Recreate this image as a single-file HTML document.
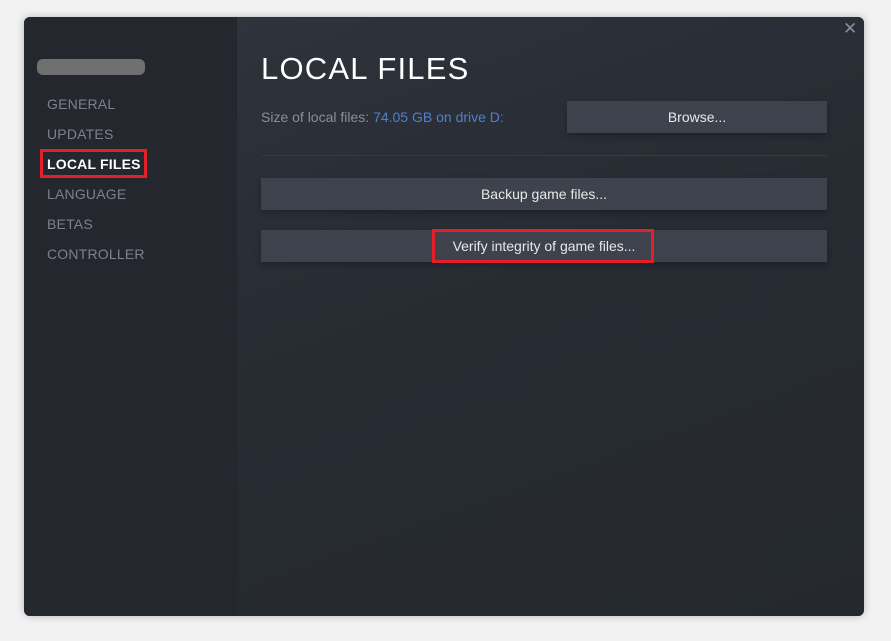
<!DOCTYPE html>
<html><head><meta charset="utf-8"><style>
html,body{margin:0;padding:0;width:891px;height:641px;background:#f2f2f2;overflow:hidden;font-family:"Liberation Sans",sans-serif;}
.win{position:absolute;left:24px;top:17px;width:840px;height:599px;border-radius:6px;overflow:hidden;background:#24272e;box-shadow:0 0 8px rgba(0,0,0,.25);}
.side{position:absolute;left:0;top:0;width:213px;height:599px;background:#24272e;}
.main{position:absolute;left:213px;top:0;width:627px;height:599px;background:linear-gradient(160deg,#2e333c 0%,#272b32 45%,#25292f 100%);}
.name{position:absolute;left:13px;top:42px;width:108px;height:16px;border-radius:6px;background:#707070;}
.nav{position:absolute;left:23px;font-size:14px;color:#7d818a;letter-spacing:.2px;}
.sel{color:#fff;font-weight:bold;}
.selbox{position:absolute;left:16px;top:132px;width:107px;height:29px;border:3px solid #e3202a;box-sizing:border-box;}
h1{position:absolute;left:24px;top:34px;margin:0;font-weight:normal;font-size:31px;color:#fff;letter-spacing:1.2px;}
.size{position:absolute;left:24px;top:92px;font-size:14px;color:#8b8f97;}
.size span{color:#4f7fcf;}
.btn{position:absolute;background:#3d424d;color:#e8e8e8;font-size:14px;text-align:center;box-shadow:0 3px 6px rgba(0,0,0,.25);}
.hr{position:absolute;left:24px;top:138px;width:566px;height:1px;background:#363a42;}
.vbox{position:absolute;left:408px;top:212px;width:222px;height:34px;border:3px solid #e3202a;box-sizing:border-box;}
.x{position:absolute;left:819px;top:2px;color:#8a8e96;font-size:17px;}
</style></head><body>
<div class="win">
<div class="side">
<div class="name"></div>
<div class="nav" style="top:79px">GENERAL</div>
<div class="nav" style="top:109px">UPDATES</div>
<div class="selbox"></div>
<div class="nav sel" style="top:139px">LOCAL FILES</div>
<div class="nav" style="top:169px">LANGUAGE</div>
<div class="nav" style="top:199px">BETAS</div>
<div class="nav" style="top:229px">CONTROLLER</div>
</div>
<div class="main">
<h1>LOCAL FILES</h1>
<div class="size">Size of local files: <span>74.05 GB on drive D:</span></div>
<div class="btn" style="left:330px;top:84px;width:260px;height:32px;line-height:32px">Browse...</div>
<div class="hr"></div>
<div class="btn" style="left:24px;top:161px;width:566px;height:32px;line-height:32px">Backup game files...</div>
<div class="btn" style="left:24px;top:213px;width:566px;height:32px;line-height:32px">Verify integrity of game files...</div>
</div>
<div class="vbox"></div>
<div class="x">✕</div>
</div>
</body></html>
